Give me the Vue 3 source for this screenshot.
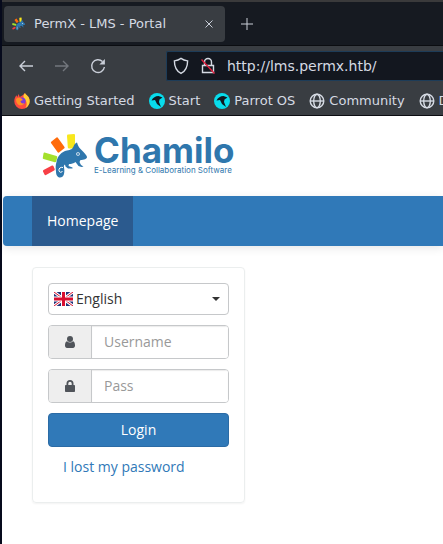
<template>
  <div class="desktop">
    <div class="browser">
      <div class="tab-strip">
        <div class="tab">
          <svg class="favicon" viewBox="0 0 48 44">
            <use href="#chamilo-mark" />
          </svg>
          <span class="tab-title">PermX - LMS - Portal</span>
          <button class="icon-btn tab-close" aria-label="Close tab">
            <svg width="8" height="8" viewBox="0 0 8 8"><path d="M0.5 0.5l7 7M7.5 0.5l-7 7" /></svg>
          </button>
        </div>
        <button class="icon-btn tab-new" aria-label="New tab">
          <svg width="12" height="12" viewBox="0 0 12 12"><path d="M6 0v12M0 6h12" /></svg>
        </button>
      </div>

      <div class="toolbar">
        <button class="icon-btn" aria-label="Back">
          <svg width="16" height="16" viewBox="0 0 16 16"><path d="M15 8H2M7 3L2 8l5 5" /></svg>
        </button>
        <button class="icon-btn" aria-label="Forward" disabled>
          <svg width="16" height="16" viewBox="0 0 16 16"><path d="M1 8h13M9 3l5 5-5 5" /></svg>
        </button>
        <button class="icon-btn" aria-label="Reload">
          <svg width="16" height="16" viewBox="0 0 16 16">
            <path d="M12.500 3.500A6.400 6.400 0 1 0 14.400 9" />
            <path class="solid" d="M14.900 1v5.500H9.400z" />
          </svg>
        </button>
        <div class="url-bar">
          <svg width="16" height="18" viewBox="0 0 16 18">
            <path d="M8 1.400c2 1.500 4.200 2.200 6.600 2.500 0 5.200-1.500 9.800-6.600 12.500C2.900 13.700 1.400 9.100 1.400 3.900 3.800 3.600 6 2.900 8 1.400z" />
          </svg>
          <svg width="16" height="18" viewBox="0 0 16 18">
            <path d="M4.500 8V5a3.500 3.500 0 0 1 7 0v3M2.500 8.500h11v7h-11z" />
            <path class="strike" d="M1.500 2.500l13 14" />
          </svg>
          <input v-model="address" type="text" aria-label="Address" />
        </div>
      </div>

      <nav class="bookmarks">
        <a v-for="item in bookmarks" :key="item.label" href="#">
          <svg v-if="item.icon === 'firefox'" width="16" height="16" viewBox="0 0 16 16">
            <path fill="#ff4b3e" d="M8 16a7.600 7.600 0 0 1-7.700-7.700C.3 5.500 1.400 3.500 2.600 2.300l.5 2L4.700 1l1 3L9 2l2-2c.5 2 4.700 3 4.700 8.200A7.700 7.700 0 0 1 8 16z" />
            <path fill="#ffcd32" d="M11 0c.5 2 4.700 3 4.700 8.200 0 3-2 5.600-4.200 6.800 2-3 1.500-7-1.500-9.500C9 3.500 9.500 1.500 11 0z" />
            <circle cx="8" cy="8" r="3.600" fill="#7a3cdb" />
            <path fill="#ff9124" d="M2 6c2-2 4-1.500 5.500-.5L9 7 6.500 8c0 2 2 3 4 2-1 2.500-4.500 3-6.500 1.500C2.500 10 2 8 2 6z" />
          </svg>
          <svg v-else-if="item.icon === 'parrot'" width="16" height="16" viewBox="0 0 16 16">
            <circle cx="8" cy="8" r="8" fill="#08dcec" />
            <path fill="#101820" d="M2.500 7.500C4 4.500 6.500 3 9.500 3L13.500 4.500 10.500 6.500 10 9l2 5-4-3-2-4z" />
          </svg>
          <svg v-else class="globe" width="16" height="16" viewBox="0 0 16 16">
            <circle cx="8" cy="8" r="6.800" />
            <ellipse cx="8" cy="8" rx="3.300" ry="6.800" />
            <path d="M1.200 8h13.600" />
          </svg>
          <span>{{ item.label }}</span>
        </a>
      </nav>
    </div>

    <div class="page">
      <header class="page-header">
        <a class="logo" href="#">
          <svg width="48" height="44" viewBox="0 0 48 44">
            <g id="chamilo-mark">
              <path fill="#ff6b0a" d="M9.500 7.500l5-4q1-.5 1.500.5l6.500 9q.5 1-.5 1.500l-5 4q-1 .5-1.500-.5L9 9q-.5-1 .5-1.500z" />
              <path fill="#f8e71c" d="M26 .5l6-.5q1 0 1 1v12.500q0 1-1 1h-5q-1 0-1.200-1L25 1.700Q25 .6 26 .5z" />
              <path fill="#a4e02c" d="M2.500 18.500l12 3.500q1 .4.700 1.400l-1 4q-.4 1-1.400.8L1.500 25q-1-.3-.7-1.300l.7-4.200q.3-1.200 1-1z" />
              <path fill="#f73f46" d="M1.500 36l8.500-4.500q1-.4 1.400.5l1.300 3q.3 1-.6 1.500L4 41q-1 .5-1.500-.5l-1.500-3Q.7 36.500 1.500 36z" />
              <path fill="#2f77ad" d="M14.500 28c1-6 5-10.500 10.500-11.500 4-.7 5.500-1.500 6.500-4 .7-2 2-3.500 3.500-4 1 4 2.500 5.500 5.500 8.500 1.800 2 4.500 4.500 4.500 6 0 2-3 2.800-6.500 3l-1 2 1.500 3 2.500 1.500-2 .5-3-1-3-4c-2 1.500-4 2-6.500 2l-.5 2 4 1.500v1H26l-2.500-2-.5-2c-1 .5-1.500 1.500-1 3C23 38.500 22 43.500 18 43.500c-2.500 0-4-2.500-4-6C13.500 34 13.500 31 14.500 28z" />
              <path fill="none" stroke="#fff" d="M21 33.500c-2.500-.8-4.500 1-4 3.300.5 2 3 2 3.300.3" />
              <circle cx="36" cy="20" r="1.800" fill="#fff" />
              <circle cx="36" cy="20" r="1" fill="#2f77ad" />
            </g>
          </svg>
          <span class="logo-text">
            <span class="logo-name">Chamilo</span>
            <span class="logo-tagline">E-Learning &amp; Collaboration Software</span>
          </span>
        </a>
      </header>

      <nav class="navbar">
        <a class="active" href="#">Homepage</a>
      </nav>

      <main>
        <form class="login-panel" @submit.prevent>
          <div class="language">
            <svg width="19" height="14" viewBox="0 0 19 14">
              <path fill="#1f3278" d="M0 0h19v14H0z" />
              <path stroke="#fff" stroke-width="3" d="M0 0l19 14M19 0L0 14" />
              <path stroke="#d80f30" stroke-width="1" d="M0 0l19 14M19 0L0 14" />
              <path stroke="#fff" stroke-width="5" d="M9.500 0v14M0 7h19" />
              <path stroke="#d80f30" stroke-width="3" d="M9.500 0v14M0 7h19" />
            </svg>
            <select v-model="language" aria-label="Language">
              <option>English</option>
            </select>
            <span class="caret"></span>
          </div>

          <div class="input-group">
            <label for="login">
              <svg width="10" height="12" viewBox="0 0 10 12">
                <circle cx="5" cy="3" r="3" />
                <path d="M2 5.300c1.700 1.700 4.300 1.700 6 0C9.500 5.800 10 7.500 10 9.500c0 1.500-.8 2.500-2 2.500H2c-1.200 0-2-1-2-2.500 0-2 .5-3.700 2-4.200z" />
              </svg>
            </label>
            <input id="login" v-model="username" type="text" placeholder="Username" />
          </div>

          <div class="input-group">
            <label for="password">
              <svg width="10" height="12" viewBox="0 0 10 12">
                <path d="M1.500 5V3.500a3.500 3.500 0 0 1 7 0V5h.7c.5 0 .8.300.8.800v5.400c0 .5-.3.800-.8.800H.8c-.5 0-.8-.3-.8-.8V5.800C0 5.300.3 5 .8 5zM3.300 5h3.400V3.500a1.700 1.700 0 0 0-3.400 0z" />
              </svg>
            </label>
            <input id="password" v-model="password" type="password" placeholder="Pass" />
          </div>

          <button class="login-btn" type="submit">Login</button>
          <a class="lost-password" href="#">I lost my password</a>
        </form>
      </main>
    </div>
  </div>
</template>

<script setup>
import { ref } from 'vue'

const address = ref('http://lms.permx.htb/')
const language = ref('English')
const username = ref('')
const password = ref('')

const bookmarks = [
  { label: 'Getting Started', icon: 'firefox' },
  { label: 'Start', icon: 'parrot' },
  { label: 'Parrot OS', icon: 'parrot' },
  { label: 'Community', icon: 'globe' },
  { label: 'Docs', icon: 'globe' }
]
</script>

<style>
body {
  margin: 0;
  overflow-x: hidden;
}
</style>

<style scoped>
* {
  box-sizing: border-box;
}

svg {
  display: block;
  flex: none;
}

a {
  text-decoration: none;
}

.desktop {
  display: flex;
  flex-direction: column;
  min-height: 100vh;
  padding-left: 2px;
  background: #060a1c;
  overflow: hidden;
}

/* browser chrome */
.browser {
  background: #393d42;
  border-top: 2px solid #3a3a3b;
  border-bottom: 1px solid #0c0d12;
  color: #d5dae3;
  font-family: 'DejaVu Sans', sans-serif;
  font-size: 13px;
}

.tab-strip {
  display: flex;
  align-items: center;
  height: 44px;
  padding: 0 2px;
  background: #161a21;
  border-bottom: 1px solid #0b0d11;
}

.tab {
  display: flex;
  align-items: center;
  width: 221px;
  height: 36px;
  padding: 0 12px 0 8px;
  background: #393d42;
  border-radius: 4px;
}

.favicon {
  width: 14px;
  height: 14px;
  margin-right: 8px;
}

.tab-title {
  flex: 1;
  white-space: nowrap;
}

.icon-btn {
  display: flex;
  padding: 0;
  background: none;
  border: none;
  color: #c9ced8;
}

.icon-btn svg,
.url-bar svg,
.globe {
  fill: none;
  stroke: currentColor;
  stroke-width: 1.4;
}

.tab-strip .icon-btn svg {
  stroke-width: 1;
}

.icon-btn:disabled {
  color: #73777d;
}

.tab-new {
  margin-left: 16px;
}

.icon-btn .solid {
  fill: currentColor;
  stroke: none;
}

.toolbar {
  display: flex;
  align-items: center;
  gap: 20px;
  height: 40px;
  padding-left: 16px;
}

.url-bar {
  display: flex;
  flex: 1;
  align-items: center;
  gap: 11px;
  height: 30px;
  margin-left: 40px;
  padding-left: 6px;
  background: #13171f;
  border: 1px solid #1d3c58;
  border-right: none;
  border-radius: 2px 0 0 2px;
}

.url-bar .strike {
  stroke: #e0213f;
}

.url-bar input {
  flex: 1;
  min-width: 0;
  padding: 0;
  background: none;
  border: none;
  outline: none;
  color: inherit;
  font: inherit;
  font-size: 14px;
}

.bookmarks {
  display: flex;
  align-items: center;
  gap: 14px;
  height: 29px;
  padding-left: 12px;
  overflow: hidden;
}

.bookmarks a {
  display: flex;
  flex: none;
  align-items: center;
  gap: 4px;
  color: inherit;
}

/* portal page */
.page {
  flex: 1;
  background: #fff;
  color: #333;
  font-family: 'Open Sans', sans-serif;
  font-size: 14px;
  line-height: 20px;
}

.page-header {
  height: 80px;
  padding: 18px 40px;
}

.logo {
  display: inline-flex;
  gap: 4px;
  color: #2f77ad;
}

.logo-text {
  display: flex;
  flex-direction: column;
}

.logo-name {
  font-family: Inter, sans-serif;
  font-size: 35px;
  font-weight: 700;
  line-height: 32px;
}

.logo-tagline {
  font-family: Inter, sans-serif;
  font-size: 8px;
  line-height: 8px;
  white-space: nowrap;
}

.navbar {
  display: flex;
  margin-left: 1px;
  padding-left: 29px;
  background: #3079b8;
  border-radius: 4px 0 0 4px;
  box-shadow: 0 2px 10px rgba(0, 0, 0, 0.1);
}

.navbar a {
  padding: 15px;
  color: #fff;
}

.navbar .active {
  background: #2b5a8e;
}

main {
  padding: 21px 30px;
}

.login-panel {
  display: flex;
  flex-direction: column;
  gap: 10px;
  width: 100%;
  max-width: 213px;
  padding: 15px 15px 25px;
  border: 1px solid #ebeeee;
  border-radius: 4px;
  box-shadow: 0 1px 2px rgba(0, 0, 0, 0.05);
}

.language {
  display: flex;
  align-items: center;
  gap: 3px;
  height: 32px;
  padding: 0 8px 0 5px;
  border: 1px solid #c6c8ca;
  border-radius: 4px;
}

.language select {
  flex: 1;
  min-width: 0;
  padding: 0;
  appearance: none;
  background: none;
  border: none;
  outline: none;
  color: inherit;
  font: inherit;
}

.caret {
  border: 4px solid transparent;
  border-top-color: #333;
  border-bottom: none;
}

.input-group {
  display: flex;
  height: 34px;
  border: 1px solid #c6c8ca;
  border-radius: 4px;
  overflow: hidden;
}

.input-group label {
  display: flex;
  align-items: center;
  justify-content: center;
  width: 43px;
  background: #eee;
  border-right: 1px solid #c6c8ca;
}

.input-group svg {
  fill: #50545a;
}

.input-group input {
  flex: 1;
  min-width: 0;
  padding: 0 12px;
  border: none;
  outline: none;
  box-shadow: inset 0 1px 1px rgba(0, 0, 0, 0.08);
  color: inherit;
  font: inherit;
}

.input-group input::placeholder {
  color: #999;
}

.login-btn {
  height: 34px;
  background: #3079b8;
  border: 1px solid #2b6ba5;
  border-radius: 4px;
  color: #fff;
  font: inherit;
}

.lost-password {
  padding: 0 15px;
  color: #3079b8;
}
</style>
